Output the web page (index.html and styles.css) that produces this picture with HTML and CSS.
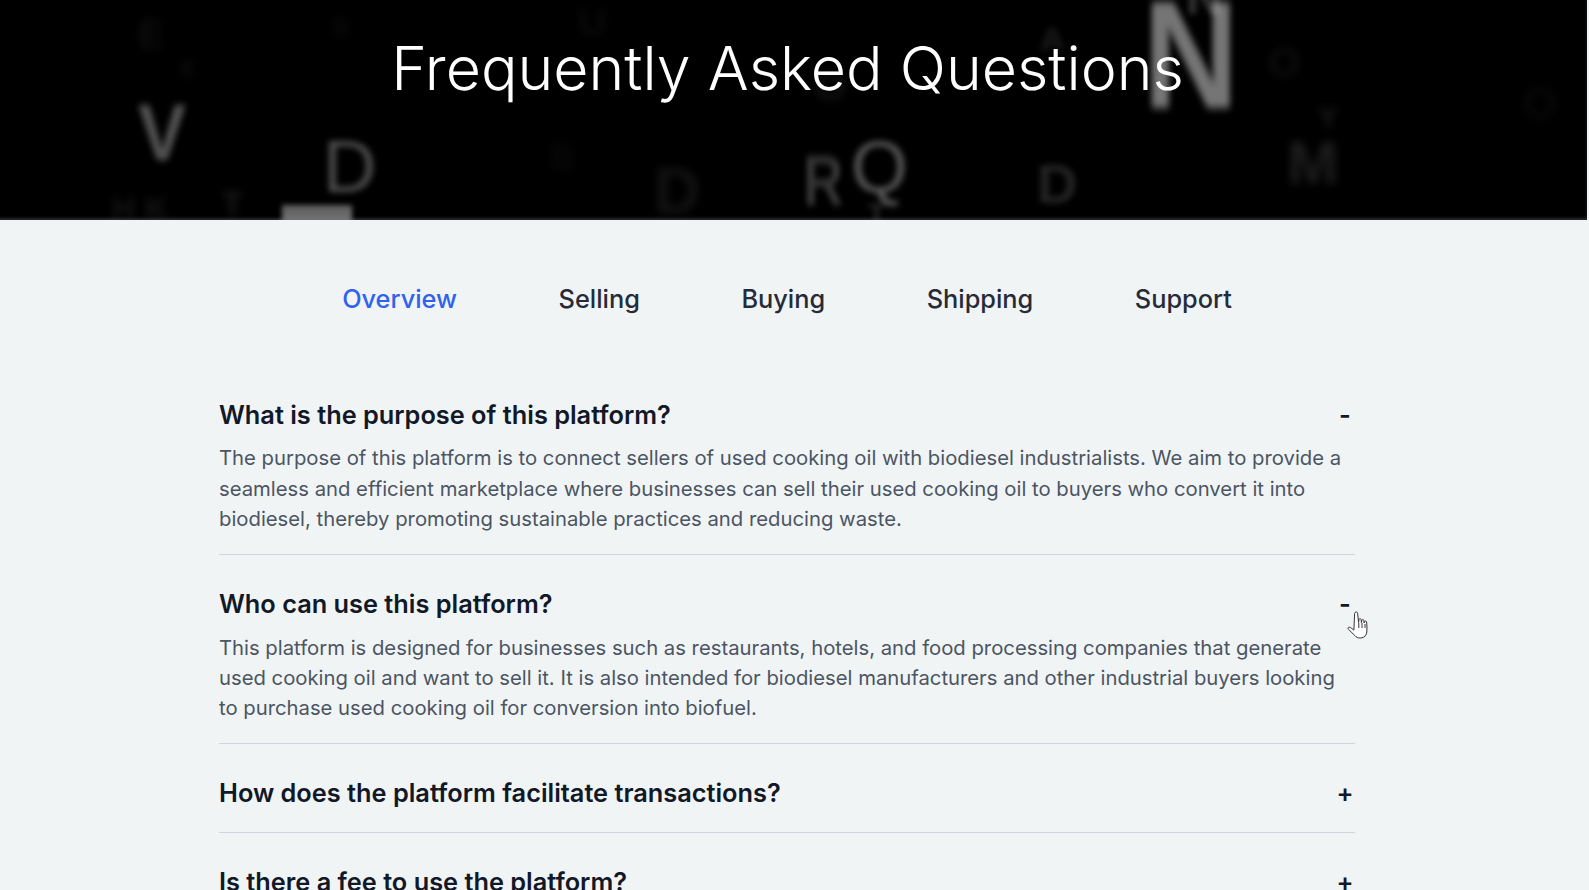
FILE: index.html
```html
<!DOCTYPE html>
<html lang="en">
<head>
<meta charset="utf-8">
<title>FAQ</title>
<link rel="stylesheet" href="styles.css">
</head>
<body>
<header class="hero">
  <div class="letters" aria-hidden="true">
    <span class="l l-n">N</span>
    <span class="l l-n2">N</span>
    <span class="l l-v">V</span>
    <span class="l l-d1">D</span>
    <span class="l l-q">Q</span>
    <span class="l l-r">R</span>
    <span class="l l-d2">D</span>
    <span class="l l-d3">D</span>
    <span class="l l-m">M</span>
    <span class="l l-y">Y</span>
    <span class="l l-a">A</span>
    <span class="l l-o">O</span>
    <span class="l l-e">E</span>
    <span class="l l-u">U</span>
    <span class="l l-h">H</span>
    <span class="l l-k">K</span>
    <span class="l l-t">T</span>
    <span class="l l-t2">T</span>
    <span class="l l-o2">O</span>
    <span class="l l-o3">O</span>
    <span class="l l-b">B</span>
    <span class="l l-x">X</span>
    <span class="l l-s">S</span>
    <span class="bar"></span>
  </div>
  <h1 class="title">Frequently Asked Questions</h1>
</header>
<main class="content">
  <nav class="tabs">
    <a class="tab active">Overview</a>
    <a class="tab">Selling</a>
    <a class="tab">Buying</a>
    <a class="tab">Shipping</a>
    <a class="tab">Support</a>
  </nav>
  <section class="faq">
    <article class="item">
      <div class="q"><h2>What is the purpose of this platform?</h2><span class="sign">-</span></div>
      <p class="a">The purpose of this platform is to connect sellers of used cooking oil with biodiesel industrialists. We aim to provide a seamless and efficient marketplace where businesses can sell their used cooking oil to buyers who convert it into biodiesel, thereby promoting sustainable practices and reducing waste.</p>
    </article>
    <article class="item">
      <div class="q"><h2>Who can use this platform?</h2><span class="sign">-</span></div>
      <p class="a">This platform is designed for businesses such as restaurants, hotels, and food processing companies that generate used cooking oil and want to sell it. It is also intended for biodiesel manufacturers and other industrial buyers looking to purchase used cooking oil for conversion into biofuel.</p>
      <svg class="cursor" width="24" height="32" viewBox="0 0 24 32" aria-hidden="true"><path d="M8 2.500c1-1 2.400-.6 2.600.8l1 9.200.4-3.200c.5-1 1.800-.9 2.100.2l.3 3 .5-2.300c.5-.9 1.700-.8 2 .2l.2 2.600.6-1.500c.6-.8 1.700-.5 1.900.5.500 3 .5 7 .2 10-.4 3.500-2.600 5.800-6 6-3 .1-4.500-.6-6-2.500l-6.500-6.400c-.7-1-.2-2 1-1.900 1.500.1 3.700 2.400 4.600 2.900L7.600 3.500c0-.4.100-.7.400-1z" fill="#fff" stroke="#333" stroke-width="1"/><path d="M11.800 13v5M15 13v5M18 14v4" stroke="#333" stroke-width="1" fill="none"/></svg>
    </article>
    <article class="item">
      <div class="q"><h2>How does the platform facilitate transactions?</h2><span class="sign">+</span></div>
    </article>
    <article class="item">
      <div class="q"><h2>Is there a fee to use the platform?</h2><span class="sign">+</span></div>
    </article>
  </section>
</main>
</body>
</html>
```
FILE: styles.css
```css
* { box-sizing: border-box; }
html, body { margin: 0; height: 890px; overflow: hidden; }
body { background: #f1f4f5; font-family: Inter, "Liberation Sans", sans-serif; color: #111827; }

.hero {
  position: relative;
  height: 220px;
  margin-right: 2px;
  background: #000;
  overflow: hidden;
  display: flex;
  justify-content: center;
  padding: 30px 12px 0 0;
}
.title { position: relative; margin: 0; font-size: 60.8px; line-height: 76px; font-weight: 300; color: #fff; }

.letters { position: absolute; inset: 0; font-family: "Liberation Sans", sans-serif; box-shadow: inset -1px -3px 3px -1px #2a2a2a; }
.l { position: absolute; font-weight: 700; line-height: 1; color: #fff; filter: blur(3px); transform-origin: left top; }
.l-n  { left: 1143px; top: -22px; font-size: 154px; opacity: .46; transform: scaleX(.86); filter: blur(4px); }
.l-n2 { left: 1186px; top: -28px; font-size: 50px; opacity: .22; }
.l-v  { left: 138px; top: 93px; font-size: 80px; opacity: .32; transform: scaleX(.9); filter: blur(3.500px); }
.l-d1 { left: 323px; top: 130px; font-size: 74px; opacity: .3; filter: blur(3px); font-weight: 400; }
.l-q  { left: 851px; top: 130px; font-size: 73px; opacity: .34; filter: blur(3px); font-weight: 400; }
.l-r  { left: 803px; top: 146px; font-size: 70px; opacity: .2; transform: scaleX(.8); filter: blur(3.500px); }
.l-d2 { left: 1037px; top: 156px; font-size: 56px; opacity: .14; filter: blur(3px); }
.l-d3 { left: 654px; top: 159px; font-size: 64px; opacity: .07; filter: blur(4px); }
.l-m  { left: 1287px; top: 132px; font-size: 62px; opacity: .11; filter: blur(4px); }
.l-y  { left: 1318px; top: 102px; font-size: 30px; opacity: .1; filter: blur(4px); }
.l-a  { left: 1040px; top: 22px; font-size: 34px; opacity: .11; filter: blur(3.500px); }
.l-o  { left: 1268px; top: 42px; font-size: 42px; opacity: .05; filter: blur(4px); }
.l-e  { left: 138px; top: 14px; font-size: 40px; opacity: .05; filter: blur(4px); }
.l-u  { left: 578px; top: 2px; font-size: 40px; opacity: .04; filter: blur(4px); }
.l-h  { left: 112px; top: 192px; font-size: 32px; opacity: .08; filter: blur(4px); }
.l-k  { left: 145px; top: 192px; font-size: 32px; opacity: .08; filter: blur(4px); }
.l-t  { left: 868px; top: 200px; font-size: 28px; opacity: .16; filter: blur(3px); }
.l-t2 { left: 222px; top: 186px; font-size: 34px; opacity: .1; filter: blur(4px); }
.l-o2 { left: 815px; top: 66px; font-size: 40px; opacity: .08; filter: blur(4px); }
.l-o3 { left: 1522px; top: 80px; font-size: 46px; opacity: .03; filter: blur(4px); }
.l-b  { left: 550px; top: 140px; font-size: 36px; opacity: .03; filter: blur(4px); }
.l-x  { left: 178px; top: 56px; font-size: 26px; opacity: .05; filter: blur(4px); }
.l-s  { left: 330px; top: 12px; font-size: 30px; opacity: .04; filter: blur(4px); }
.bar  { position: absolute; left: 282px; top: 205px; width: 70px; height: 20px; background: linear-gradient(#5a5a5a, #7a7a7a); filter: blur(2.500px); }

.content { padding: 60px 0 0 219px; width: 1355px; }
.tabs { display: flex; justify-content: center; gap: 101.5px; height: 38px; margin-bottom: 48.3px; }
.tab { font-size: 25.34px; line-height: 37px; font-weight: 500; color: #252b38; }
.tab.active { color: #2f62ee; }

.faq { display: flex; flex-direction: column; }
.item { position: relative; border-bottom: 1px solid #d1d5db; padding: 29.7px 0 19.7px; }
.q { display: flex; justify-content: space-between; align-items: center; height: 38px; }
.q h2 { margin: 0; font-size: 25.34px; line-height: 38px; font-weight: 600; color: #111827; }
.sign { width: 20px; text-align: center; font-size: 25.34px; line-height: 38px; font-weight: 600; color: #111827; }
.a { margin: 9.5px 0 0; font-size: 20.27px; line-height: 30.4px; color: #4b5563; }
.cursor { position: absolute; left: 1128px; top: 55px; }
```
